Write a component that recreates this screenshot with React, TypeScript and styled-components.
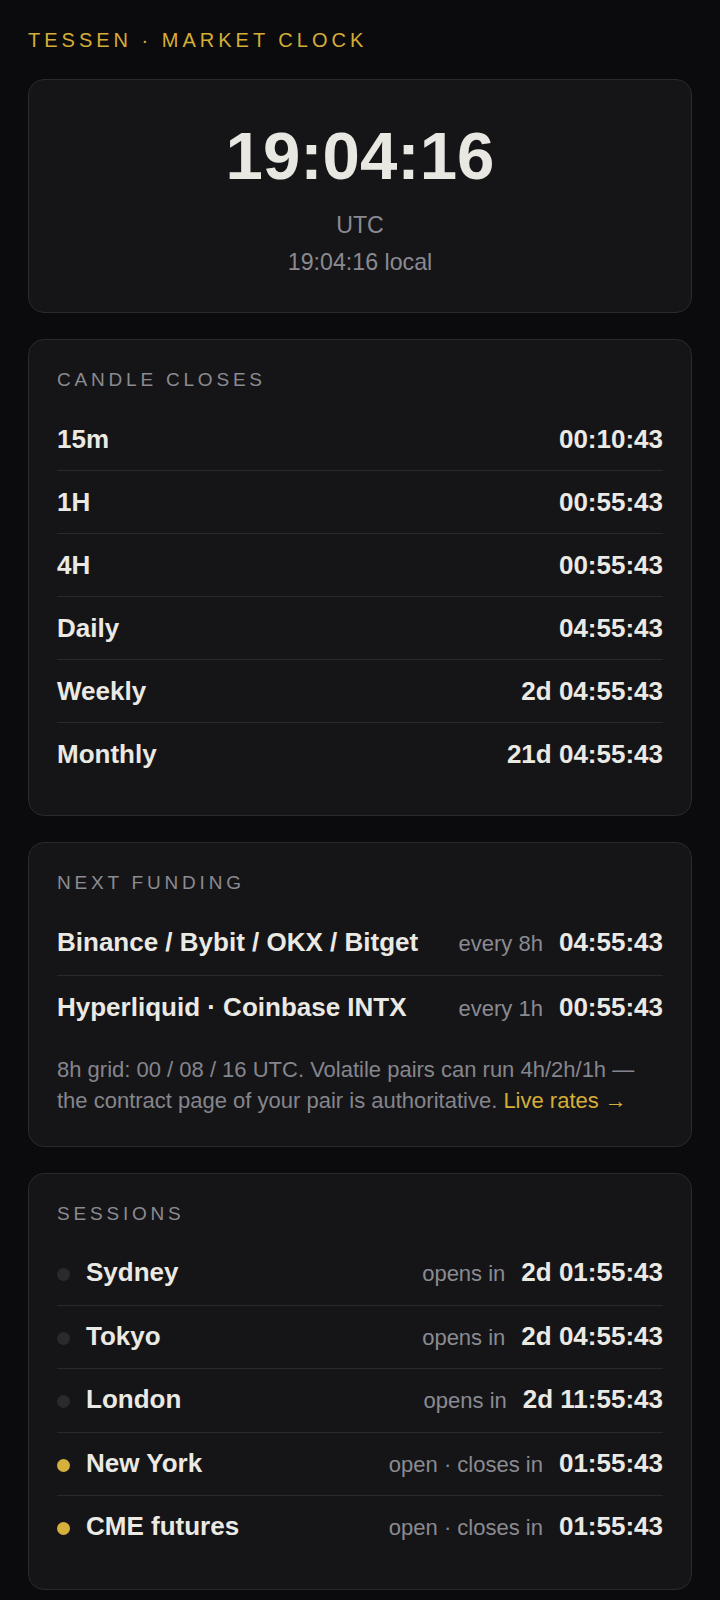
import styled, { createGlobalStyle } from "styled-components";

const GlobalStyle = createGlobalStyle`
  html, body {
    margin: 0;
    padding: 0;
    background: #0b0b0d;
  }
  body {
    font-family: "Liberation Sans", Arial, Helvetica, sans-serif;
    color: #ebe9e4;
  }
`;

type Candle = { label: string; value: string };
type Funding = { name: string; every: string; value: string };
type Session = { name: string; status: string; value: string; open: boolean };

const candles: Candle[] = [
  { label: "15m", value: "00:10:43" },
  { label: "1H", value: "00:55:43" },
  { label: "4H", value: "00:55:43" },
  { label: "Daily", value: "04:55:43" },
  { label: "Weekly", value: "2d 04:55:43" },
  { label: "Monthly", value: "21d 04:55:43" },
];

const funding: Funding[] = [
  { name: "Binance / Bybit / OKX / Bitget", every: "every 8h", value: "04:55:43" },
  { name: "Hyperliquid · Coinbase INTX", every: "every 1h", value: "00:55:43" },
];

const sessions: Session[] = [
  { name: "Sydney", status: "opens in", value: "2d 01:55:43", open: false },
  { name: "Tokyo", status: "opens in", value: "2d 04:55:43", open: false },
  { name: "London", status: "opens in", value: "2d 11:55:43", open: false },
  { name: "New York", status: "open · closes in", value: "01:55:43", open: true },
  { name: "CME futures", status: "open · closes in", value: "01:55:43", open: true },
];

const App = () => {
  return (
    <>
      <GlobalStyle />
      <Page>
        <Brand>TESSEN · MARKET CLOCK</Brand>

        <ClockCard>
          <BigTime>19:04:16</BigTime>
          <SubLine>UTC</SubLine>
          <SubLine>19:04:16 local</SubLine>
        </ClockCard>

        <Card>
          <SectionTitle>CANDLE CLOSES</SectionTitle>
          <List>
            {candles.map((c) => (
              <Row key={c.label}>
                <Name>{c.label}</Name>
                <Value>{c.value}</Value>
              </Row>
            ))}
          </List>
        </Card>

        <Card>
          <SectionTitle>NEXT FUNDING</SectionTitle>
          <List>
            {funding.map((f) => (
              <Row key={f.name}>
                <Name>{f.name}</Name>
                <Right>
                  <Hint>{f.every}</Hint>
                  <Value>{f.value}</Value>
                </Right>
              </Row>
            ))}
          </List>
          <Note>
            8h grid: 00 / 08 / 16 UTC. Volatile pairs can run 4h/2h/1h — the
            contract page of your pair is authoritative.{" "}
            <GoldLink href="#">Live rates&nbsp;→</GoldLink>
          </Note>
        </Card>

        <Card>
          <SectionTitle>SESSIONS</SectionTitle>
          <List>
            {sessions.map((s) => (
              <Row key={s.name} $lh={29.5}>
                <Left>
                  <Dot $active={s.open} />
                  <Name>{s.name}</Name>
                </Left>
                <Right>
                  <Hint>{s.status}</Hint>
                  <Value>{s.value}</Value>
                </Right>
              </Row>
            ))}
          </List>
        </Card>
      </Page>
    </>
  );
};

export default App;

const Page = styled.main`
  display: flex;
  flex-direction: column;
  gap: 26px;
  padding: 28px 28px 40px;
`;

const Brand = styled.div`
  font-size: 20px;
  line-height: 25px;
  letter-spacing: 0.2em;
  color: #d5ad37;
`;

const Card = styled.section`
  background: #151517;
  border: 1px solid #2a2a2e;
  border-radius: 16px;
  padding: 29px 28px 30px;
`;

const ClockCard = styled(Card)`
  padding: 42px 28px 31px;
  text-align: center;
`;

const BigTime = styled.div`
  font-size: 67.2px;
  font-weight: 700;
  line-height: 1;
  color: #e9e7e1;
  margin-bottom: 18px;
  font-variant-numeric: tabular-nums;
`;

const SubLine = styled.div`
  font-size: 23.2px;
  line-height: 37px;
  color: #8a8a92;
`;

const SectionTitle = styled.h2`
  margin: 0 0 17px;
  font-size: 19px;
  font-weight: 400;
  line-height: 22px;
  letter-spacing: 0.2em;
  color: #8b8b92;
`;

const List = styled.div`
  display: flex;
  flex-direction: column;
`;

const Row = styled.div<{ $lh?: number }>`
  display: flex;
  align-items: baseline;
  justify-content: space-between;
  padding: 16px 0;
  line-height: ${(p) => p.$lh ?? 30}px;
  border-bottom: 1px solid #2a2a2e;

  &:last-child {
    border-bottom: none;
  }
`;

const Left = styled.div`
  display: flex;
  align-items: center;
  gap: 16px;
`;

const Right = styled.div`
  display: flex;
  align-items: baseline;
  gap: 16px;
`;

const Name = styled.span`
  font-size: 26px;
  font-weight: 700;
  color: #ebe9e4;
  white-space: nowrap;
`;

const Value = styled.span`
  font-size: 26px;
  font-weight: 700;
  color: #ebe9e4;
  white-space: nowrap;
  font-variant-numeric: tabular-nums;
`;

const Hint = styled.span`
  font-size: 22px;
  color: #8a8a92;
  white-space: nowrap;
`;

const Dot = styled.span<{ $active: boolean }>`
  width: 13px;
  height: 13px;
  margin-top: 3px;
  border-radius: 50%;
  flex-shrink: 0;
  background: ${(p) => (p.$active ? "#d5b03c" : "#2a2a2e")};
`;

const Note = styled.p`
  margin: 14px 0 0;
  font-size: 22px;
  line-height: 31px;
  color: #85858d;
`;

const GoldLink = styled.a`
  color: #d5ad37;
  text-decoration: none;
`;
